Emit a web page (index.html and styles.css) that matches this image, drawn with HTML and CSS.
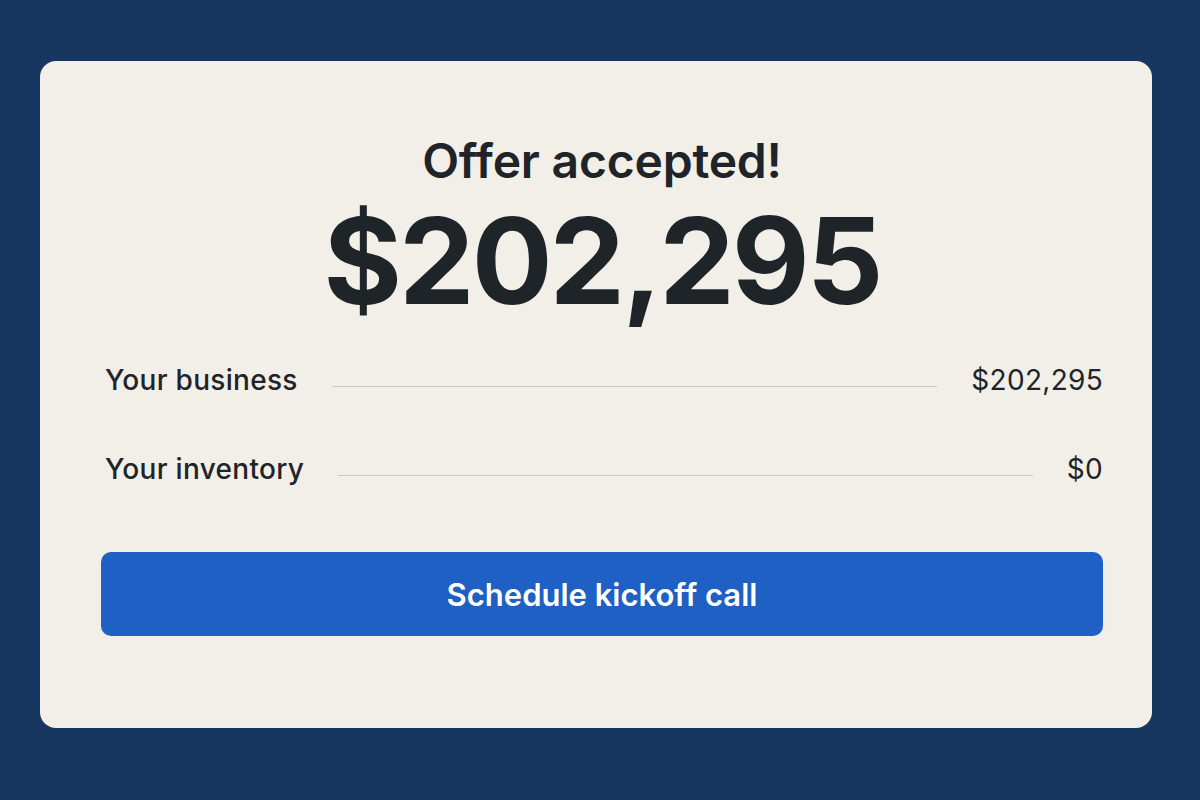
FILE: index.html
```html
<!DOCTYPE html>
<html lang="en">

<head>
    <meta charset="UTF-8">
    <meta name="viewport" content="width=device-width, initial-scale=1.0">
    <title>Offer accepted</title>
    <link rel="stylesheet" href="styles.css">
</head>

<body>

    <div id="offerCard">
        <h1 class="offerTitle">Offer accepted!</h1>
        <div class="offerAmount">$202,295</div>

        <div class="breakdown">
            <div class="breakdownRow">
                <span class="rowLabel">Your business</span>
                <span class="rowRule"></span>
                <span class="rowValue">$202,295</span>
            </div>
            <div class="breakdownRow">
                <span class="rowLabel">Your inventory</span>
                <span class="rowRule"></span>
                <span class="rowValue">$0</span>
            </div>
        </div>

        <button id="kickoffBtn">Schedule kickoff call</button>
    </div>

</body>

</html>
```

FILE: styles.css
```css
body {
    font-family: Inter, 'Liberation Sans', sans-serif;
    margin: 0;
    padding: 61px 48px 72px 40px;
    background-color: #173660;
    color: #1f2429;
    min-height: 100vh;
    box-sizing: border-box;
}

#offerCard {
    background-color: #f2eee8;
    border-radius: 16px;
    height: 667px;
    box-sizing: border-box;
    padding: 70px 49px 0 61px;
    display: flex;
    flex-direction: column;
    align-items: center;
}

.offerTitle {
    margin: 0;
    font-size: 48px;
    font-weight: 600;
    line-height: 60px;
    letter-spacing: -0.2px;
}

.offerAmount {
    font-size: 120px;
    font-weight: 700;
    line-height: 124px;
    letter-spacing: -3px;
    margin-top: 8px;
}

.breakdown {
    width: 100%;
    margin-top: 39px;
    display: flex;
    flex-direction: column;
    gap: 53px;
    padding: 0 0 0 4px;
    box-sizing: border-box;
}

.breakdownRow {
    display: flex;
    align-items: center;
    gap: 34px;
    height: 36px;
}

.rowLabel {
    font-size: 28px;
    font-weight: 500;
    letter-spacing: 0.3px;
}

.rowRule {
    flex: 1;
    height: 1px;
    background-color: #cdc9c1;
    margin-top: 12px;
}

.rowValue {
    font-size: 28px;
    font-weight: 400;
    letter-spacing: 0.3px;
}

#kickoffBtn {
    width: 100%;
    height: 84px;
    margin-top: 65px;
    background-color: #1e60c4;
    color: #fff;
    border: none;
    border-radius: 10px;
    font-family: inherit;
    font-size: 31px;
    font-weight: 600;
    cursor: pointer;
}

#kickoffBtn:hover {
    background-color: #1a55ae;
}
```
